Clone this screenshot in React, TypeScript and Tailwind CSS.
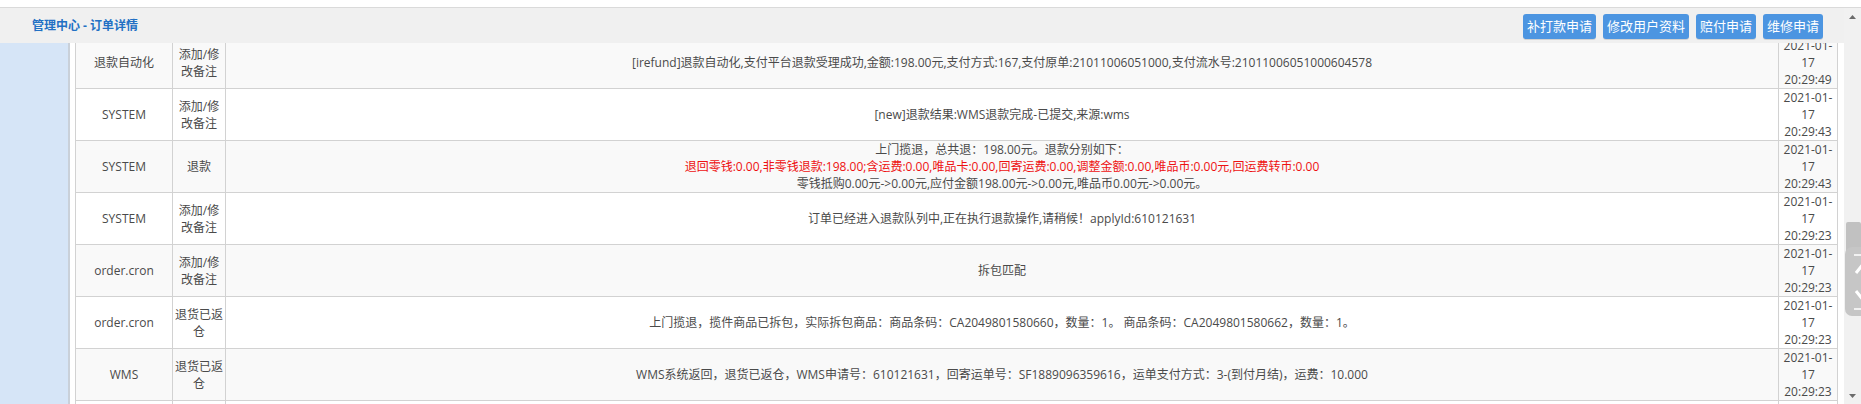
import type { ReactNode } from 'react'

type LogRow = {
  operator: string
  action: string[]
  content: ReactNode
  time: string
}

const rows: LogRow[] = [
  {
    operator: '退款自动化',
    action: ['添加/修', '改备注'],
    content:
      '[irefund]退款自动化,支付平台退款受理成功,金额:198.00元,支付方式:167,支付原单:21011006051000,支付流水号:21011006051000604578',
    time: '20:29:49',
  },
  {
    operator: 'SYSTEM',
    action: ['添加/修', '改备注'],
    content: '[new]退款结果:WMS退款完成-已提交,来源:wms',
    time: '20:29:43',
  },
  {
    operator: 'SYSTEM',
    action: ['退款'],
    content: (
      <>
        <div>上门揽退，总共退：198.00元。退款分别如下：</div>
        <div className="text-[#ee1111]">
          退回零钱:0.00,非零钱退款:198.00;含运费:0.00,唯品卡:0.00,回寄运费:0.00,调整金额:0.00,唯品币:0.00元,回运费转币:0.00
        </div>
        <div>零钱抵购0.00元-&gt;0.00元,应付金额198.00元-&gt;0.00元,唯品币0.00元-&gt;0.00元。</div>
      </>
    ),
    time: '20:29:43',
  },
  {
    operator: 'SYSTEM',
    action: ['添加/修', '改备注'],
    content: '订单已经进入退款队列中,正在执行退款操作,请稍候！applyId:610121631',
    time: '20:29:23',
  },
  {
    operator: 'order.cron',
    action: ['添加/修', '改备注'],
    content: '拆包匹配',
    time: '20:29:23',
  },
  {
    operator: 'order.cron',
    action: ['退货已返', '仓'],
    content:
      '上门揽退，揽件商品已拆包，实际拆包商品：商品条码：CA2049801580660，数量：1。 商品条码：CA2049801580662，数量：1。',
    time: '20:29:23',
  },
  {
    operator: 'WMS',
    action: ['退货已返', '仓'],
    content:
      'WMS系统返回，退货已返仓，WMS申请号：610121631，回寄运单号：SF1889096359616，运单支付方式：3-(到付月结)，运费：10.000',
    time: '20:29:23',
  },
]

const actions = ['补打款申请', '修改用户资料', '赔付申请', '维修申请']

function Cell({ children, className = '' }: { children?: ReactNode; className?: string }) {
  return (
    <div
      className={`flex flex-col items-center justify-center text-center border-r border-b border-[#d2d2d2] ${className}`}
    >
      {children}
    </div>
  )
}

function Scrollbar() {
  return (
    <div className="relative w-[17px] shrink-0 bg-[#f1f1f1]">
      {/* up button */}
      <div className="h-[17px] flex items-center justify-center">
        <svg width="7" height="4" viewBox="0 0 7 4">
          <path d="M0 4 L3.5 0 L7 4 Z" fill="#6b6b6b" />
        </svg>
      </div>
      {/* thumb */}
      <div className="absolute top-[214px] left-[2px] right-0 h-[30px] bg-[#c1c1c1] rounded-t-[2px]" />
      {/* floating back-to-top widget, mostly off screen */}
      <div className="absolute top-[239px] left-[1px] right-0 h-[69px] bg-[#c6c6c6] rounded-bl-[7px] rounded-tl-[7px] overflow-hidden">
        <svg className="absolute left-[9px] top-[4px]" width="20" height="62" viewBox="0 0 20 62">
          <path d="M0 4 H20" stroke="#ffffff" strokeWidth="1.5" />
          <path d="M2 22 L10 12 L18 22" stroke="#ffffff" strokeWidth="3" fill="none" />
          <path d="M10 13 V30" stroke="#ffffff" strokeWidth="3" />
          <path d="M2 40 L10 50 L18 40" stroke="#ffffff" strokeWidth="3" fill="none" />
          <path d="M10 32 V49" stroke="#ffffff" strokeWidth="3" />
          <path d="M0 58 H20" stroke="#ffffff" strokeWidth="1.5" />
        </svg>
      </div>
      {/* down button */}
      <div className="absolute top-[379px] left-0 right-0 h-[17px] flex items-center justify-center">
        <svg width="7" height="4" viewBox="0 0 7 4">
          <path d="M0 0 L3.5 4 L7 0 Z" fill="#6b6b6b" />
        </svg>
      </div>
    </div>
  )
}

export default function App() {
  return (
    <div className="w-[1861px] h-[404px] overflow-hidden bg-white flex flex-col font-['Open_Sans','Noto_Sans_CJK_SC',sans-serif] text-[12px] leading-[17px] text-[#4a4a4a]">
      <div className="h-[7px] shrink-0 bg-white" />
      <div className="flex flex-1 min-h-0 border-t border-[#dadada]">
        <div className="flex flex-col flex-1 min-w-0">
          {/* ── Header bar ── */}
          <header className="h-[35px] shrink-0 bg-[#f0f0f0] flex items-center justify-between pl-[32px] pr-[21px]">
            <h1 className="text-[12px] font-bold text-[#2270c4]">管理中心 - 订单详情</h1>
            <div className="flex gap-[7px] mt-[2px]">
              {actions.map((a) => (
                <button
                  key={a}
                  type="button"
                  className="h-[25px] px-[4px] rounded-[3px] bg-[#4c95e1] text-white text-[13px] leading-[25px] shadow-[0_1px_0_0_rgba(0,0,0,0.12)]"
                >
                  {a}
                </button>
              ))}
            </div>
          </header>

          {/* ── Body ── */}
          <div className="flex flex-1 min-h-0">
            <aside className="w-[68px] shrink-0 bg-[#d6e5f7]" />
            <div className="w-[2px] shrink-0 bg-[#c9d0d9]" />
            <div className="flex-1 min-w-0 overflow-hidden pl-[5px] pr-[6px]">
              <div className="-mt-[6px] grid grid-cols-[97px_53px_1fr_59px] border-l border-[#d2d2d2]">
                {rows.map((r, i) => {
                  const bg = i % 2 === 0 ? 'bg-[#f9f9f9]' : 'bg-white'
                  return (
                    <div key={i} className="contents">
                      <Cell className={bg}>{r.operator}</Cell>
                      <Cell className={bg}>
                        {r.action.map((l) => (
                          <span key={l}>{l}</span>
                        ))}
                      </Cell>
                      <Cell className={`${bg} px-2`}>{r.content}</Cell>
                      <Cell className={bg}>
                        <span>2021-01-</span>
                        <span>17</span>
                        <span>{r.time}</span>
                      </Cell>
                    </div>
                  )
                })}
                {/* next row, only its top edge is in view */}
                <Cell className="h-[52px] bg-white" />
                <Cell className="h-[52px] bg-white" />
                <Cell className="h-[52px] bg-white" />
                <Cell className="h-[52px] bg-white" />
              </div>
            </div>
          </div>
        </div>
        <Scrollbar />
      </div>
    </div>
  )
}
